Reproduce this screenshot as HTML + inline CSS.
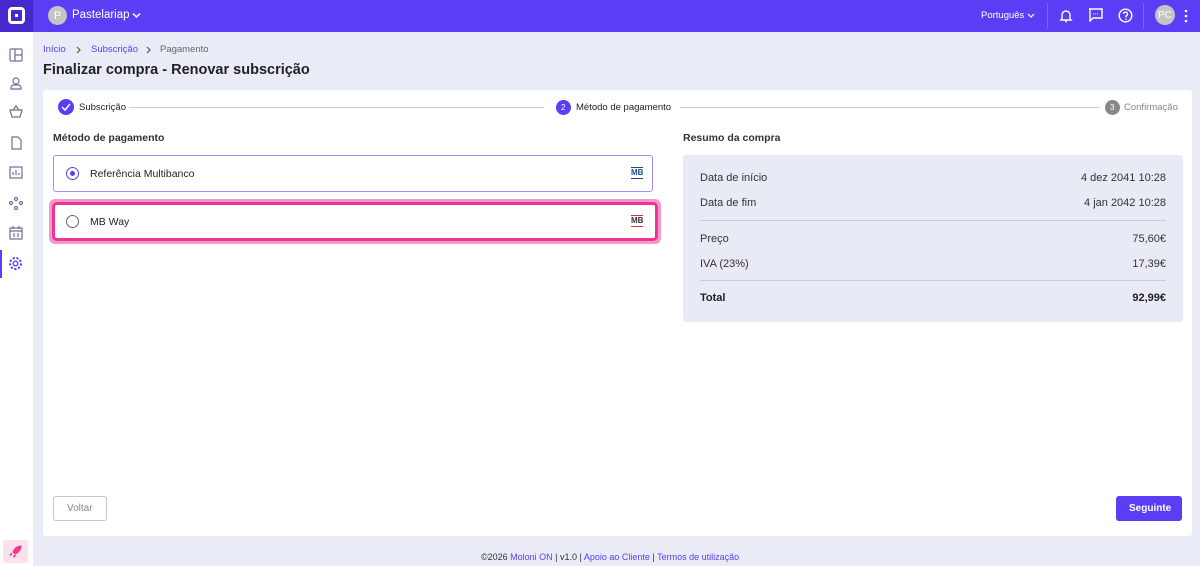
<!DOCTYPE html><html><head><meta charset="utf-8"><style>
*{box-sizing:border-box;margin:0;padding:0}
body{width:1200px;height:566px;overflow:hidden;font-family:"Liberation Sans",sans-serif;background:#e9ebf6;position:relative;color:#222;line-height:1.2}
.top{position:absolute;left:0;top:0;width:1200px;height:32px;background:#5b3df5}
.logo{position:absolute;left:0;top:0;width:33px;height:32px;background:#4628cf}
.side{position:absolute;left:0;top:32px;width:33px;height:534px;background:#fff}
.abs{position:absolute}
.c{text-align:center}
.c b,.c i{position:relative;font-style:normal}
.card{position:absolute;left:43px;top:90px;width:1149px;height:446px;background:#fff;border-radius:3px}
.t{position:absolute;font-size:11px;white-space:nowrap}
.opt{position:absolute;left:53px;width:600px;height:37px;background:#fff;border-radius:3px}
.sum{position:absolute;left:683px;top:155px;width:500px;height:167px;background:#e8eaf5;border-radius:3px}
.row{position:absolute;left:17px;right:17px;font-size:11px;color:#333}
.row span{position:absolute;right:0}
svg{position:absolute}
</style></head><body>
<div class="top"></div>
<div class="logo"><div class="abs" style="left:8px;top:7px;width:17px;height:17px;border:3px solid #fff;border-radius:4px"><div class="abs" style="left:4px;top:4px;width:3px;height:3px;background:#fff"></div></div></div>
<div class="abs" style="left:48px;top:6px;width:19px;height:19px;border-radius:50%;background:#c4c4c4"></div>
<div class="t" style="left:54px;top:10px;color:#fff;font-size:11px">P</div>
<div class="t" style="left:72px;top:9px;color:#fff;font-size:11.5px">Pastelariap</div>
<svg style="left:132px;top:12px" width="9" height="7"><path d="M1 1.5l3.5 3.5 3.5-3.5" stroke="#fff" fill="none" stroke-width="1.5"/></svg>
<div class="t" style="left:981px;top:10px;color:#fff;font-size:9.5px">Português</div>
<svg style="left:1027px;top:13px" width="8" height="6"><path d="M1 1l3 3 3-3" stroke="#fff" fill="none" stroke-width="1.2"/></svg>
<div class="abs" style="left:1047px;top:3px;width:1px;height:26px;background:#7d66f7"></div>
<div class="abs" style="left:1143px;top:3px;width:1px;height:26px;background:#7d66f7"></div>
<svg style="left:1059px;top:8px" width="14" height="15"><path d="M3 11V7a4 4 0 0 1 8 0v4l1 1H2zM6 13.5h2" stroke="#fff" fill="none" stroke-width="1.4"/></svg>
<svg style="left:1088px;top:8px" width="15" height="14"><path d="M1 1h13v9H5l-3 3V1z" stroke="#fff" fill="none" stroke-width="1.4"/><path d="M5 6h1M7 6h1M9 6h1" stroke="#fff"/></svg>
<svg style="left:1118px;top:8px" width="15" height="15"><circle cx="7.5" cy="7.5" r="6.3" stroke="#fff" fill="none" stroke-width="1.4"/><path d="M5.5 6a2 2 0 1 1 2.5 2v1.5" stroke="#fff" fill="none" stroke-width="1.3"/><circle cx="8" cy="11.3" r=".8" fill="#fff"/></svg>
<div class="abs" style="left:1155px;top:5px;width:20px;height:20px;border-radius:50%;background:#c4c4c4"></div>
<div class="t" style="left:1158px;top:10px;color:#fff;font-size:10px">PC</div>
<svg style="left:1184px;top:9px" width="4" height="14"><circle cx="2" cy="2" r="1.3" fill="#fff"/><circle cx="2" cy="7" r="1.3" fill="#fff"/><circle cx="2" cy="12" r="1.3" fill="#fff"/></svg>
<div class="side"></div>
<svg style="left:9px;top:48px" width="14" height="230" fill="none" stroke="#6e6f96" stroke-width="1.2">
<rect x="1" y="1" width="12" height="12" rx="1"/><path d="M6 1v12M6 7h7"/>
<circle cx="7" cy="33" r="3"/><path d="M2 41h10v-2a3 3 0 0 0-3-2H5a3 3 0 0 0-3 2z"/>
<path d="M1 62h12l-2 7H3zM4 62l3-4 3 4"/>
<path d="M3 89h6l3 3v9H3z"/>
<rect x="1" y="119" width="12" height="11"/><path d="M4 127v-3M7 127v-5M10 127v-2"/>
<circle cx="7" cy="151" r="1.5"/><circle cx="7" cy="160" r="1.5"/><circle cx="2" cy="155" r="1.5"/><circle cx="12" cy="155" r="1.5"/>
<rect x="1" y="180" width="12" height="11"/><path d="M1 183h12M4 178v3M10 178v3M4 186h2M8 186h2M4 188h2M8 188h2"/>
</svg>
<div class="abs" style="left:0;top:250px;width:2px;height:28px;background:#5b3df5"></div>
<svg style="left:8px;top:256px" width="15" height="15"><circle cx="7.5" cy="7.5" r="2.3" stroke="#5b3df5" fill="none" stroke-width="1.4"/><circle cx="7.5" cy="7.5" r="5.5" stroke="#5b3df5" fill="none" stroke-width="2" stroke-dasharray="2.2 1.6"/></svg>
<div class="abs" style="left:3px;top:540px;width:25px;height:23px;background:#fde0ee;border-radius:3px"></div>
<svg style="left:9px;top:545px" width="13" height="13"><path d="M12 1C8 1 5 4 4 7l2 2c3-1 6-4 6-8zM3 8l-2 2 2 0M5 10v2l2-2" fill="#ef3b8d" stroke="#ef3b8d"/></svg>
<div class="t" style="left:43px;top:44px;font-size:9.5px;color:#5b3df5">Início</div>
<svg style="left:76px;top:46px" width="6" height="8"><path d="M1 1l3 3-3 3" stroke="#555" fill="none" stroke-width="1.2"/></svg>
<div class="t" style="left:91px;top:44px;font-size:9.5px;color:#5b3df5">Subscrição</div>
<svg style="left:146px;top:46px" width="6" height="8"><path d="M1 1l3 3-3 3" stroke="#555" fill="none" stroke-width="1.2"/></svg>
<div class="t" style="left:160px;top:44px;font-size:9.5px;color:#666">Pagamento</div>
<div class="t" style="left:43px;top:62px;font-size:14.5px;font-weight:bold;color:#222">Finalizar compra - Renovar subscrição</div>
<div class="card"></div>
<div class="abs" style="left:58px;top:99px;width:16px;height:16px;border-radius:50%;background:#5b3df5"></div>
<svg style="left:61px;top:103px" width="10" height="8"><path d="M1 4l3 3 5-6" stroke="#fff" fill="none" stroke-width="1.5"/></svg>
<div class="t" style="left:79px;top:102px;font-size:9.5px">Subscrição</div>
<div class="abs" style="left:129px;top:107px;width:415px;height:1px;background:#ccc"></div>
<div class="abs" style="left:556px;top:100px;width:15px;height:15px;border-radius:50%;background:#5b3df5"></div>
<div class="t" style="left:561px;top:103px;color:#fff;font-size:8px">2</div>
<div class="t" style="left:576px;top:102px;font-size:9.5px">Método de pagamento</div>
<div class="abs" style="left:680px;top:107px;width:420px;height:1px;background:#ccc"></div>
<div class="abs" style="left:1105px;top:100px;width:15px;height:15px;border-radius:50%;background:#888"></div>
<div class="t" style="left:1110px;top:103px;color:#fff;font-size:8px">3</div>
<div class="t" style="left:1124px;top:102px;font-size:9.5px;color:#888">Confirmação</div>
<div class="t" style="left:53px;top:132px;font-weight:bold;color:#333;font-size:10.5px">Método de pagamento</div>
<div class="t" style="left:683px;top:132px;font-weight:bold;color:#333;font-size:10.5px">Resumo da compra</div>
<div class="opt" style="top:155px;border:1px solid #9f8ef8"></div>
<div class="abs" style="left:66px;top:167px;width:13px;height:13px;border-radius:50%;border:1.5px solid #5b3df5"><div class="abs" style="left:2.5px;top:2.5px;width:5px;height:5px;border-radius:50%;background:#5b3df5"></div></div>
<div class="t" style="left:90px;top:168px;font-size:10.5px">Referência Multibanco</div>
<div class="t" style="left:631px;top:167px;font-size:8px;font-weight:bold;color:#1b4a8a;border-top:1px solid #1b4a8a;border-bottom:1px solid #1b4a8a">MB</div>
<div class="abs" style="left:49px;top:199px;width:612px;height:45px;border-radius:6px;background:#f49ac9"></div>
<div class="abs" style="left:52px;top:202px;width:606px;height:39px;border-radius:5px;border:3px solid #ee3596;background:#fff"></div>
<div class="abs" style="left:66px;top:215px;width:13px;height:13px;border-radius:50%;border:1px solid #666"></div>
<div class="t" style="left:90px;top:216px;font-size:10.5px">MB Way</div>
<div class="t" style="left:631px;top:215px;font-size:8px;font-weight:bold;color:#333;border-top:1px solid #d33;border-bottom:1px solid #d33">MB</div>
<div class="sum">
<div class="row" style="top:17px">Data de início<span>4 dez 2041 10:28</span></div>
<div class="row" style="top:42px">Data de fim<span>4 jan 2042 10:28</span></div>
<div class="abs" style="left:17px;right:17px;top:65px;height:1px;background:#c9cbe0"></div>
<div class="row" style="top:78px">Preço<span>75,60€</span></div>
<div class="row" style="top:103px">IVA (23%)<span>17,39€</span></div>
<div class="abs" style="left:17px;right:17px;top:125px;height:1px;background:#c9cbe0"></div>
<div class="row" style="top:137px;font-weight:bold;color:#222">Total<span>92,99€</span></div>
</div>
<div class="abs" style="left:53px;top:496px;width:54px;height:25px;border:1px solid #c3c6dc;border-radius:3px"></div>
<div class="t" style="left:67px;top:503px;color:#888;font-size:10px">Voltar</div>
<div class="abs" style="left:1116px;top:496px;width:66px;height:25px;background:#5b3df5;border-radius:3px"></div>
<div class="t" style="left:1129px;top:503px;color:#fff;font-size:10px;font-weight:bold">Seguinte</div>
<div class="t" style="left:481px;top:552px;font-size:9px;color:#333">©2026 <span style="color:#5b3df5">Moloni ON</span> | v1.0 | <span style="color:#5b3df5">Apoio ao Cliente</span> | <span style="color:#5b3df5">Termos de utilização</span></div>
</body></html>
